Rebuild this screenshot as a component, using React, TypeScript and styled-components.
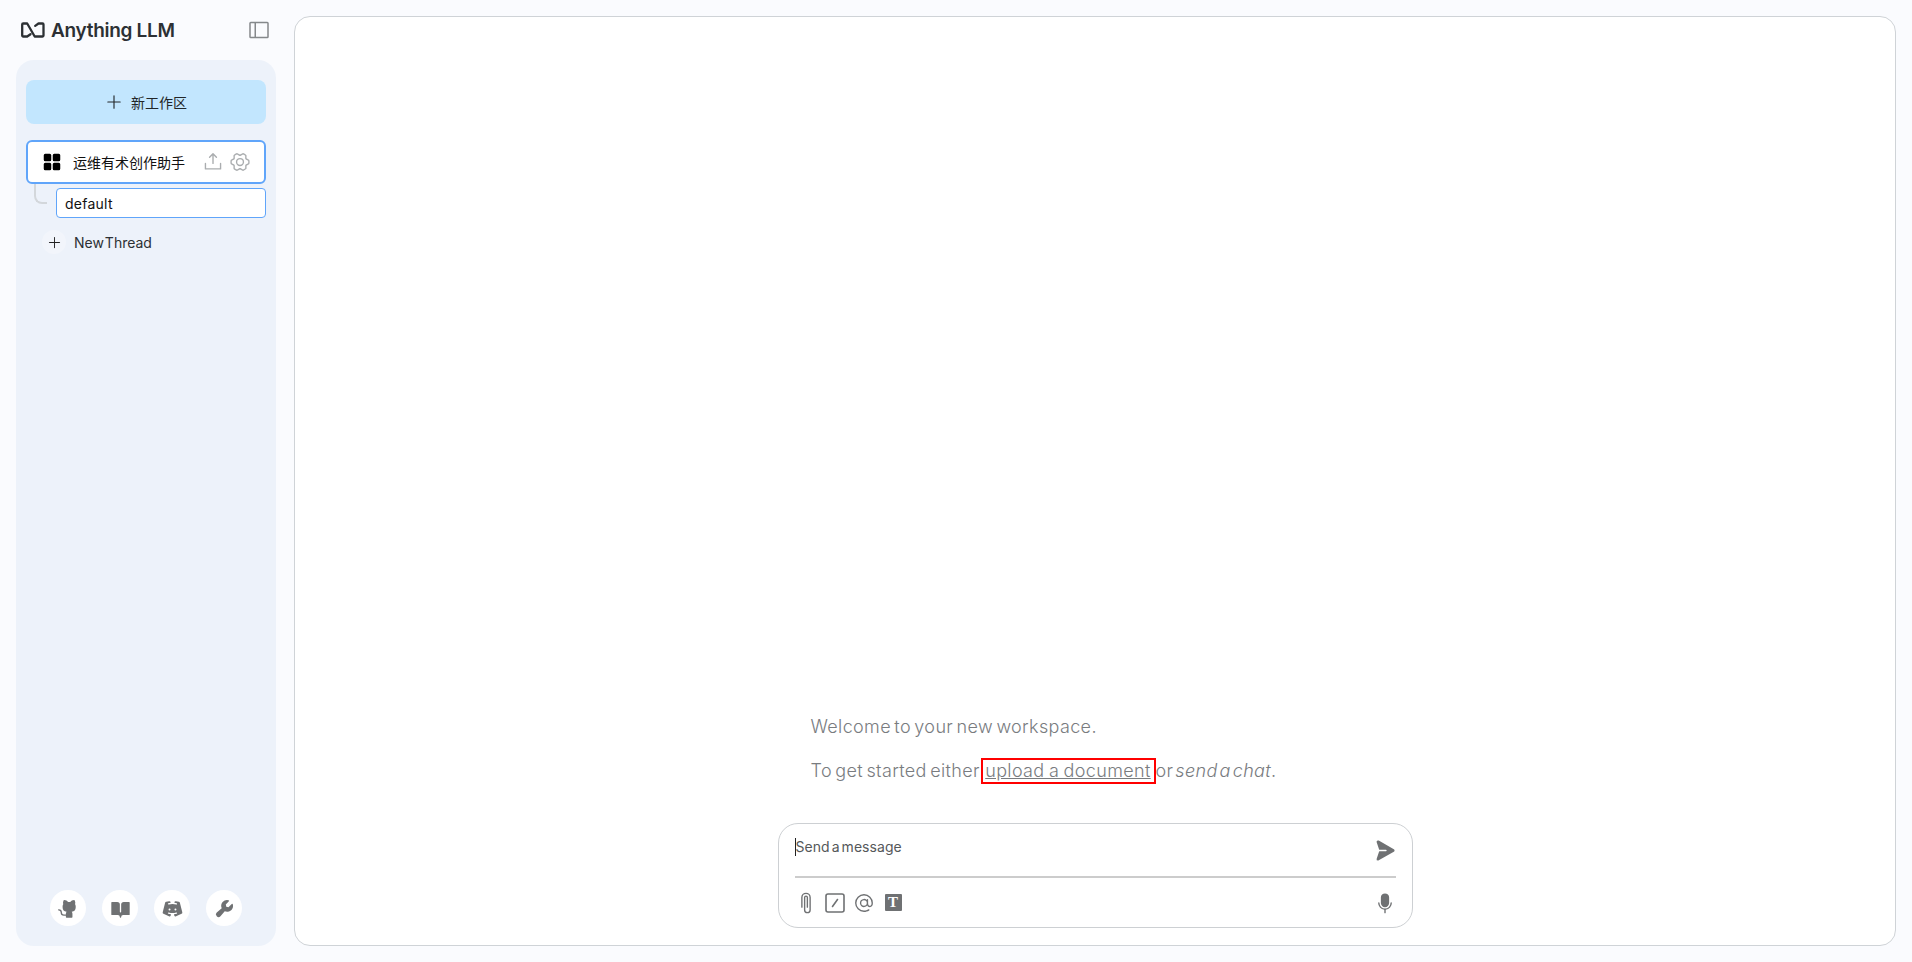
import React from 'react';
import styled, { createGlobalStyle } from 'styled-components';
import {
  PiBookOpenFill,
  PiDiscordLogoFill,
  PiGearSix,
  PiGithubLogoFill,
  PiMicrophoneFill,
  PiPaperPlaneRightFill,
  PiPaperclipHorizontal,
  PiPlus,
  PiSidebarSimple,
  PiSquaresFourFill,
  PiUploadSimple,
  PiAt,
  PiWrenchFill,
} from 'react-icons/pi';

const GlobalStyle = createGlobalStyle`
  html, body { margin: 0; padding: 0; height: 100%; }
  body {
    background: #fafbfe;
    font-family: "Inter", "Noto Sans CJK SC", sans-serif;
    color: #222628;
    overflow: hidden;
  }
`;

const Page = styled.div`
  display: flex;
  height: 962px;
  box-sizing: border-box;
  padding: 16px;
  gap: 18px;
`;

const Side = styled.aside`
  width: 260px;
  flex: none;
  display: flex;
  flex-direction: column;
`;

const TopBar = styled.div`
  height: 60px;
  margin-top: -16px;
  display: flex;
  align-items: center;
  justify-content: space-between;
  padding-left: 5px;
  padding-right: 5px;
`;

const Logo = styled.div`
  display: flex;
  align-items: center;
  gap: 5px;
  font-size: 19px;
  font-weight: 600;
  letter-spacing: -0.3px;
  color: #2c3034;
`;

const ToggleBtn = styled.span`
  display: flex;
  color: #85888b;
  font-size: 24px;
`;

const Panel = styled.div`
  flex: 1;
  background: #edf2fa;
  border-radius: 18px;
  padding: 20px 10px;
  display: flex;
  flex-direction: column;
`;

const NewWorkspace = styled.button`
  height: 44px;
  border: 0;
  border-radius: 8px;
  background: #c2e6fe;
  display: flex;
  align-items: center;
  justify-content: center;
  gap: 8px;
  font-family: "Noto Sans CJK SC", sans-serif;
  font-size: 14px;
  color: #222628;
  svg { font-size: 18px; }
`;

const WorkspaceRow = styled.div`
  margin-top: 16px;
  height: 44px;
  box-sizing: border-box;
  border: 2px solid #60a5fa;
  border-radius: 6px;
  background: #fff;
  display: flex;
  align-items: center;
  padding: 0 13px 0 12px;
  font-family: "Noto Sans CJK SC", sans-serif;
  font-size: 14px;
  color: #111;
`;

const WorkspaceName = styled.span`
  flex: 1;
  margin-left: 9px;
`;

const RowIcon = styled.span`
  display: flex;
  color: #aaadaf;
  font-size: 22px;
  margin-left: 5px;
`;

const SquaresIcon = styled.span`
  display: flex;
  font-size: 24px;
  color: #000;
`;

const ThreadRow = styled.div`
  margin-top: 4px;
  display: flex;
`;

const Elbow = styled.div`
  width: 13px;
  height: 20px;
  margin-left: 8px;
  margin-right: 9px;
  margin-top: -4px;
  box-sizing: border-box;
  border-left: 2px solid #d3d7db;
  border-bottom: 2px solid #d3d7db;
  border-bottom-left-radius: 8px;
`;

const ThreadItem = styled.div`
  flex: 1;
  height: 30px;
  box-sizing: border-box;
  border: 1px solid #60a5fa;
  border-radius: 4px;
  background: #fff;
  display: flex;
  align-items: center;
  padding-left: 8px;
  font-size: 14px;
  letter-spacing: 0.25px;
  color: #111;
`;

const NewThread = styled.div`
  margin-top: 12px;
  margin-left: 16px;
  display: flex;
  align-items: center;
  gap: 8px;
  font-size: 14px;
  word-spacing: -3px;
  color: #2c3034;
`;

const PlusDot = styled.span`
  width: 24px;
  height: 24px;
  border-radius: 50%;
  background: #f2f5fb;
  display: flex;
  align-items: center;
  justify-content: center;
  font-size: 15px;
  color: #222;
`;

const FooterIcons = styled.div`
  margin-top: auto;
  display: flex;
  justify-content: center;
  gap: 16px;
`;

const RoundIcon = styled.span`
  width: 36px;
  height: 36px;
  border-radius: 50%;
  background: #fff;
  display: flex;
  align-items: center;
  justify-content: center;
  color: #6f7173;
  font-size: 21px;
`;

const Main = styled.main`
  flex: 1;
  background: #fff;
  border: 1px solid #cfd3d7;
  border-radius: 16px;
  display: flex;
  flex-direction: column;
  align-items: center;
  justify-content: flex-end;
  padding-bottom: 17px;
`;

const Welcome = styled.div`
  width: 635px;
  box-sizing: border-box;
  padding-left: 33px;
  margin-bottom: 38px;
  color: #797c7f;
  font-size: 18px;
  letter-spacing: 0.35px;
  word-spacing: -2px;
  line-height: 28px;
  font-weight: 300;
`;

const WelcomeLine = styled.p`
  margin: 0;
  & + & { margin-top: 16px; }
`;

const UploadLink = styled.a`
  text-decoration: underline;
  outline: 2px solid #f00;
  outline-offset: 0;
  padding: 0 3px 1px 2px;
  word-spacing: -1px;
`;

const Trailing = styled.span`
  word-spacing: -3.5px;
`;

const Composer = styled.div`
  width: 635px;
  height: 105px;
  box-sizing: border-box;
  border: 1px solid #cdd0d3;
  border-radius: 20px;
  background: #fff;
  padding: 0 16px;
  display: flex;
  flex-direction: column;
`;

const InputRow = styled.div`
  height: 52px;
  display: flex;
  align-items: center;
  justify-content: space-between;
  border-bottom: 2px solid #cccccc;
`;

const Placeholder = styled.span`
  border-left: 1px solid #222;
  font-size: 14px;
  line-height: 18px;
  letter-spacing: 0.05px;
  word-spacing: -2px;
  color: #55585a;
  margin-top: -6px;
`;

const SendIcon = styled.span`
  display: flex;
  font-size: 23px;
  color: #6f7173;
`;

const ToolRow = styled.div`
  flex: 1;
  display: flex;
  align-items: center;
  justify-content: space-between;
`;

const ToolGroup = styled.div`
  display: flex;
  align-items: center;
  gap: 8px;
`;

const Tool = styled.span`
  display: flex;
  color: #6f7173;
  font-size: 22px;
`;

const ClipTool = styled(Tool)`
  transform: rotate(-90deg);
`;

const TextTool = styled.span`
  width: 17px;
  height: 17px;
  border-radius: 1px;
  background: #6f7173;
  color: #fff;
  display: flex;
  align-items: center;
  justify-content: center;
  font-family: "Liberation Serif", serif;
  font-weight: 700;
  font-size: 15px;
  margin-left: 2px;
`;

const LogoMark = () => (
  <svg width="25" height="16" viewBox="0 0 25 16" fill="none" stroke="#2c3034" strokeWidth="2.3" strokeLinejoin="round" strokeLinecap="round">
    <path d="M9.5 12.2 6.2 14.5H2.2c-.6 0-1-.4-1-1v-11c0-.6.4-1 1-1h4l7.5 13h4.1 3.7c.6 0 1-.4 1-1v-11c0-.6-.4-1-1-1h-4l-3.3 2.4" />
  </svg>
);

const SlashBox = () => (
  <svg width="20" height="20" viewBox="0 0 20 20" fill="none" stroke="#6f7173" strokeWidth="1.6" strokeLinecap="round">
    <rect x="1" y="1" width="18" height="18" rx="2" />
    <path d="M7.5 13.5l5-7" />
  </svg>
);

export default function App() {
  return (
    <>
      <GlobalStyle />
      <Page>
        <Side>
          <TopBar>
            <Logo>
              <LogoMark />
              Anything LLM
            </Logo>
            <ToggleBtn><PiSidebarSimple /></ToggleBtn>
          </TopBar>
          <Panel>
            <NewWorkspace><PiPlus />新工作区</NewWorkspace>
            <WorkspaceRow>
              <SquaresIcon><PiSquaresFourFill /></SquaresIcon>
              <WorkspaceName>运维有术创作助手</WorkspaceName>
              <RowIcon><PiUploadSimple /></RowIcon>
              <RowIcon><PiGearSix /></RowIcon>
            </WorkspaceRow>
            <ThreadRow>
              <Elbow />
              <ThreadItem>default</ThreadItem>
            </ThreadRow>
            <NewThread>
              <PlusDot><PiPlus /></PlusDot>
              New Thread
            </NewThread>
            <FooterIcons>
              <RoundIcon><PiGithubLogoFill /></RoundIcon>
              <RoundIcon><PiBookOpenFill /></RoundIcon>
              <RoundIcon><PiDiscordLogoFill /></RoundIcon>
              <RoundIcon><PiWrenchFill /></RoundIcon>
            </FooterIcons>
          </Panel>
        </Side>
        <Main>
          <Welcome>
            <WelcomeLine>Welcome to your new workspace.</WelcomeLine>
            <WelcomeLine>
              To get started either <UploadLink>upload a document</UploadLink><Trailing> or <em>send a chat</em>.</Trailing>
            </WelcomeLine>
          </Welcome>
          <Composer>
            <InputRow>
              <Placeholder>Send a message</Placeholder>
              <SendIcon><PiPaperPlaneRightFill /></SendIcon>
            </InputRow>
            <ToolRow>
              <ToolGroup>
                <ClipTool><PiPaperclipHorizontal /></ClipTool>
                <Tool><SlashBox /></Tool>
                <Tool><PiAt /></Tool>
                <TextTool>T</TextTool>
              </ToolGroup>
              <Tool><PiMicrophoneFill /></Tool>
            </ToolRow>
          </Composer>
        </Main>
      </Page>
    </>
  );
}
